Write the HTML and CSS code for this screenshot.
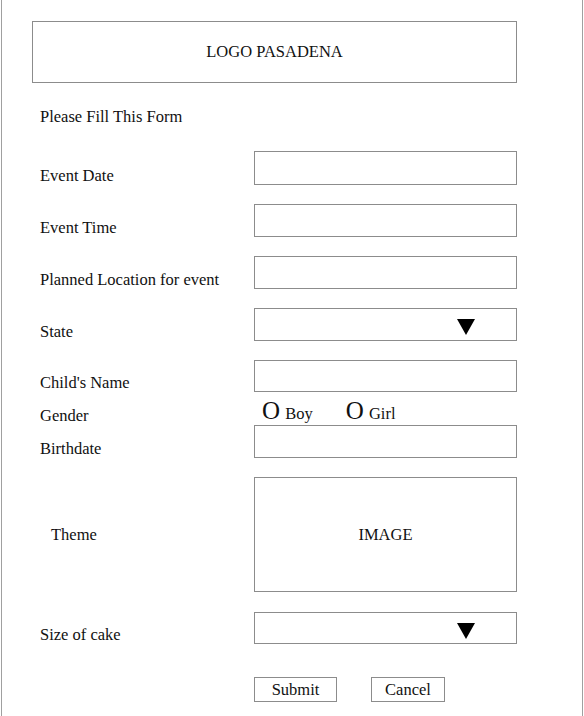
FILE: index.html
```html
<!DOCTYPE html>
<html lang="en">
<head>
    <meta charset="UTF-8">
    <meta name="viewport" content="width=device-width, initial-scale=1.0">
    <title>Pasadena - Party Form</title>
    <link rel="stylesheet" href="styles.css">
</head>
<body>
    <div class="page">
        <div class="logo">LOGO PASADENA</div>

        <form class="party-form">
            <p class="intro">Please Fill This Form</p>

            <div class="row first">
                <label>Event Date</label>
                <div class="field"></div>
            </div>

            <div class="row">
                <label>Event Time</label>
                <div class="field"></div>
            </div>

            <div class="row">
                <label>Planned Location for event</label>
                <div class="field"></div>
            </div>

            <div class="row">
                <label>State</label>
                <div class="field select">
                    <svg class="arrow" width="18" height="16" viewBox="0 0 18 16"><polygon points="0,0 18,0 9,16" fill="#000"/></svg>
                </div>
            </div>

            <div class="row">
                <label>Child's Name</label>
                <div class="field short"></div>
            </div>

            <div class="row gender">
                <label>Gender</label>
                <div class="radios">
                    <span class="radio"><span class="dot">O</span> Boy</span>
                    <span class="radio"><span class="dot">O</span> Girl</span>
                </div>
            </div>

            <div class="row tight">
                <label>Birthdate</label>
                <div class="field"></div>
            </div>

            <div class="row theme">
                <label>Theme</label>
                <div class="field image">IMAGE</div>
            </div>

            <div class="row cake">
                <label>Size of cake</label>
                <div class="field select short">
                    <svg class="arrow" width="18" height="16" viewBox="0 0 18 16"><polygon points="0,0 18,0 9,16" fill="#000"/></svg>
                </div>
            </div>

            <div class="row actions">
                <span></span>
                <div class="buttons">
                    <button type="button" class="btn submit">Submit</button>
                    <button type="button" class="btn cancel">Cancel</button>
                </div>
            </div>
        </form>
    </div>
</body>
</html>
```

FILE: styles.css
```css
body {
    margin: 0;
    padding: 0;
    background-color: #fff;
    font-family: "Liberation Serif", "Times New Roman", serif;
    font-size: 16.5px;
    color: #111;
}
.page {
    margin-left: 1px;
    width: 582px;
    min-height: 740px;
    box-sizing: border-box;
    border-left: 1px solid #a0a0a0;
    border-right: 1px solid #a0a0a0;
    padding-top: 21px;
}
.logo {
    margin-left: 30px;
    width: 485px;
    height: 62px;
    box-sizing: border-box;
    border: 1px solid #8c8c8c;
    display: flex;
    align-items: center;
    justify-content: center;
    line-height: 18px;
}
.party-form {
    padding-left: 38px;
}
.intro {
    margin: 25px 0 0 0;
    line-height: 18px;
}
.row {
    display: grid;
    grid-template-columns: 214px 263px;
    align-items: end;
    margin-top: 19px;
    line-height: 18px;
}
.row.first {
    margin-top: 25px;
}
.field {
    height: 33px;
    box-sizing: border-box;
    border: 1px solid #8c8c8c;
}
.first .field {
    height: 34px;
}
.field.short {
    height: 32px;
}
.select {
    display: flex;
    justify-content: flex-end;
    align-items: flex-start;
    padding: 10px 41px 0 0;
}
.gender {
    margin-top: 0;
    height: 33px;
}
.tight {
    margin-top: 0;
}
.radios {
    display: flex;
    gap: 33px;
    padding-left: 8px;
    margin-bottom: 2px;
}
.radio .dot {
    font-size: 25px;
    line-height: 18px;
    margin-right: 1px;
}
.theme {
    align-items: center;
}
.theme label {
    padding-left: 11px;
}
.image {
    height: 115px;
    display: flex;
    align-items: center;
    justify-content: center;
}
.cake {
    margin-top: 20px;
}
.actions {
    margin-top: 33px;
}
.buttons {
    display: flex;
    gap: 34px;
}
.btn {
    height: 25px;
    box-sizing: border-box;
    border: 1px solid #8c8c8c;
    background-color: #fff;
    font-family: inherit;
    font-size: 16.5px;
    color: #111;
    padding: 0;
    line-height: 23px;
}
.submit {
    width: 83px;
}
.cancel {
    width: 74px;
}
```
